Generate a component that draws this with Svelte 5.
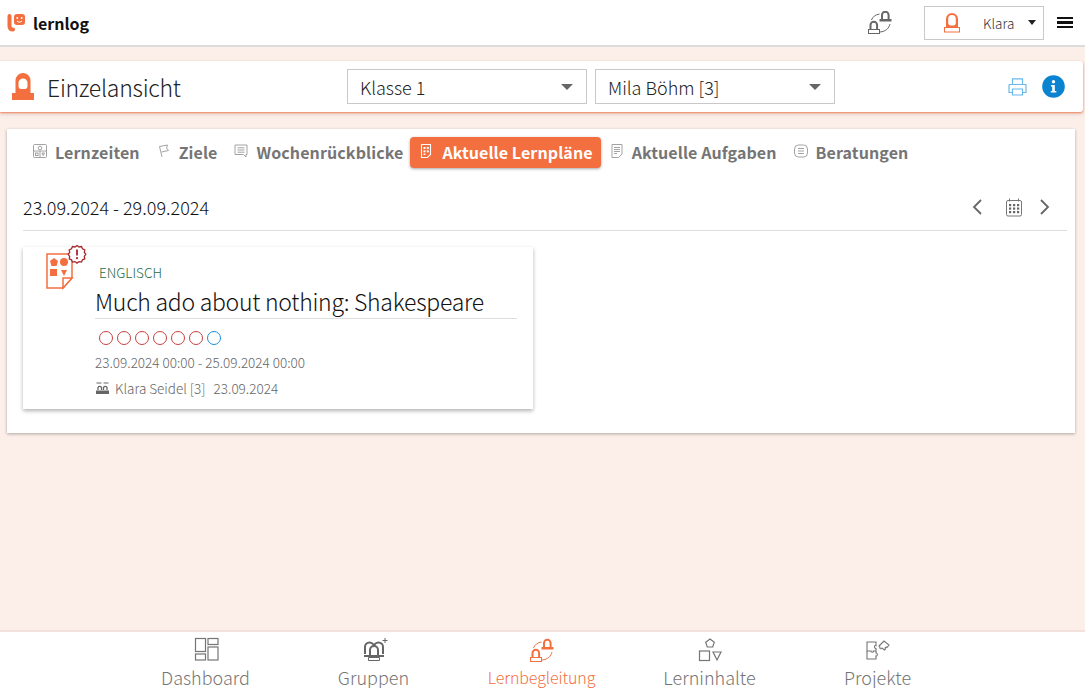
<script>
  const tabs = [
    { id: 'zeit', label: 'Lernzeiten' },
    { id: 'ziel', label: 'Ziele' },
    { id: 'woche', label: 'Wochenrückblicke' },
    { id: 'plan', label: 'Aktuelle Lernpläne', active: true },
    { id: 'aufgabe', label: 'Aktuelle Aufgaben' },
    { id: 'beratung', label: 'Beratungen' }
  ];
  const nav = [
    { id: 'dash', label: 'Dashboard' },
    { id: 'gruppen', label: 'Gruppen' },
    { id: 'begleitung', label: 'Lernbegleitung', active: true },
    { id: 'inhalte', label: 'Lerninhalte' },
    { id: 'projekte', label: 'Projekte' }
  ];
  const dots = ['r', 'r', 'r', 'r', 'r', 'r', 'b'];
</script>

{#snippet pair()}
  <g fill="none" stroke="currentColor">
    <path d="M3.500 18v-4a3.300 3.300 0 0 1 6.600 0v4" stroke-width="2"/>
    <rect x="1.500" y="18.500" width="11" height="4"/>
    <path d="M15 8V4a3.300 3.300 0 0 1 6.600 0v4" stroke-width="2"/>
    <path d="M4.500 9c1-3 4-5.500 8-6M23 13c-1 4-4 7.500-10 8"/>
  </g>
  <rect x="12.500" y="8" width="12" height="2.500" fill="currentColor"/>
{/snippet}

<div class="page">
  <header class="top">
    <div class="brand">
      <svg width="20" height="20" viewBox="0 0 20 20"><path d="M2.500 3v10c0 2.500 1 3.500 3.500 3.500" fill="none" stroke="#f36f3f" stroke-width="4" stroke-linecap="round"/><rect x="7" y="1" width="11" height="11" rx="3" fill="#f36f3f"/><circle cx="10.300" cy="5" r=".9" fill="#fff"/><circle cx="14.700" cy="5" r=".9" fill="#fff"/><path d="M10 8c1.500 1.500 3.500 1.500 5 0" stroke="#fff" fill="none"/></svg>
      <span>lernlog</span>
    </div>
    <div class="top-right">
      <svg class="swap" width="26" height="24" viewBox="0 0 26 24">{@render pair()}</svg>
      <div class="user">
        <svg width="16" height="20" viewBox="0 0 16 20"><path fill-rule="evenodd" d="M2 14.500V6a6 6 0 0 1 12 0v8.500zM4.200 6a3.800 4 0 0 1 7.600 0v4c0 1.500-1 2.500-2 2.500H6.200c-1 0-2-1-2-2.500z" fill="#f36f3f"/><rect x=".5" y="14.500" width="15" height="4.500" fill="#fff" stroke="#f36f3f"/></svg>
        <span class="name">Klara</span>
        <i class="caret small"></i>
      </div>
      <div class="burger"><b></b><b></b><b></b></div>
    </div>
  </header>

  <main>
    <section class="titlebar">
      <div class="title">
        <svg width="22" height="27" viewBox="0 0 22 27"><path fill-rule="evenodd" d="M3.500 21V7.500a7.500 7.500 0 0 1 15 0V21zM6.500 10a4.500 4.500 0 0 1 9 0v3c0 2-1 3-2.500 3H9c-1.500 0-2.500-1-2.500-3z" fill="#f36f3f"/><rect x="0" y="20" width="22" height="7" fill="#f36f3f"/></svg>
        <h1>Einzelansicht</h1>
      </div>
      <div class="selects">
        <div class="select">Klasse 1<i class="caret"></i></div>
        <div class="select">Mila Böhm [3]<i class="caret"></i></div>
      </div>
      <div class="tools">
        <svg width="19" height="18" viewBox="0 0 19 18" fill="none" stroke="#6bb8ea" stroke-width="1.200"><path d="M4.500 6V.8h10V6M1 6.500h17v8h-3.500M1 6.500v8h3.500M4.500 11h10v6h-10z"/></svg>
        <svg width="23" height="23" viewBox="0 0 23 23"><circle cx="11.500" cy="11.500" r="11.300" fill="#0a84d0"/><circle cx="11.500" cy="6.700" r="1.700" fill="#fff"/><path d="M9 10h3.800v6H14.300v1.500H8.800V16h1.400v-4.500H9z" fill="#fff"/></svg>
      </div>
    </section>

    <section class="panel">
      <nav class="tabs">
        {#each tabs as t}
          <div class="tab" class:active={t.active}>
            <svg class="ticon" width="16" height="16" viewBox="0 0 16 16" fill="none" stroke="currentColor" stroke-width=".9">
              {#if t.id === 'zeit'}
                <rect x="1.500" y="1.500" width="13" height="13" rx="1"/><path d="M1.500 8h13M8 8v6.500"/><circle cx="8" cy="5" r="1.800"/><rect x="3.500" y="10" width="2.500" height="2.500"/><path d="M10 10l1.200 2.500L12.500 10z"/>
              {:else if t.id === 'ziel'}
                <path d="M6 14L3.500 3.500 11.500 2l-1 3 2 2.500-7 1.500"/>
              {:else if t.id === 'woche'}
                <path d="M2 2h12v9.500h-1v2.500l-2.500-2.500H2zM4.500 4.800h7M4.500 7h7M4.500 9.200h7"/>
              {:else if t.id === 'plan'}
                <path d="M3.500 1.500h9v10l-3 3h-6z" stroke="#fff" stroke-width="1.100"/><g fill="#fff" stroke="none"><rect x="5.500" y="4" width="2" height="2"/><rect x="8.800" y="4" width="2" height="2"/><rect x="5.500" y="7.300" width="2" height="2"/><rect x="8.800" y="7.300" width="2" height="2"/><rect x="5.500" y="10.500" width="2" height="1.500"/></g>
              {:else if t.id === 'aufgabe'}
                <path d="M3 1.500h10v9.500l-3.500 3.500H3zM5 4.500h6M5 6.500h6M5 8.500h6M5 10.500h3"/>
              {:else}
                <rect x="1.500" y="2" width="13" height="12" rx="4"/><path d="M5 5.500h6M5 8h6M5 10.500h6"/>
              {/if}
            </svg>
            {t.label}
          </div>
        {/each}
      </nav>

      <div class="daterow">
        <span class="range">23.09.2024 - 29.09.2024</span>
        <div class="pager">
          <svg class="prev" width="12" height="18" viewBox="0 0 12 18"><path d="M10 2L3 9l7 7" fill="none" stroke="#666" stroke-width="1.800"/></svg>
          <svg width="18" height="19" viewBox="0 0 18 19" fill="none" stroke="#777"><rect x="1.500" y="2.500" width="15" height="15.500" rx="1.500"/><path d="M4.500 .5v3M13.500 .5v3"/><g fill="#666" stroke="none"><rect x="4" y="6" width="2.200" height="2.200"/><rect x="8" y="6" width="2.200" height="2.200"/><rect x="12" y="6" width="2.200" height="2.200"/><rect x="4" y="9.500" width="2.200" height="2.200"/><rect x="8" y="9.500" width="2.200" height="2.200"/><rect x="12" y="9.500" width="2.200" height="2.200"/><rect x="4" y="13" width="2.200" height="2.200"/><rect x="8" y="13" width="2.200" height="2.200"/><rect x="12" y="13" width="2.200" height="2.200"/></g></svg>
          <svg width="12" height="18" viewBox="0 0 12 18"><path d="M2 2l7 7-7 7" fill="none" stroke="#666" stroke-width="1.800"/></svg>
        </div>
      </div>

      <article class="card">
        <div class="badge">
          <svg width="42" height="42" viewBox="0 0 42 42">
            <path d="M1 7h25v24l-9 10H1z" fill="#fff" stroke="#f36f3f" stroke-width="1.500"/>
            <path d="M17 41V31h9z" fill="#fff" stroke="#f36f3f" stroke-width="1.500"/>
            <path d="M8 11l4 3-1.500 5h-5L4 14z" fill="#f36f3f"/>
            <circle cx="18" cy="15" r="4" fill="#f36f3f"/>
            <rect x="4" y="22" width="7" height="7" fill="#f36f3f"/>
            <path d="M15 23h6l-3 6z" fill="#f36f3f"/>
            <g transform="translate(0 -3)">
              <path d="M31 1.500l2 1.500 2.500-.5 1 2.300 2.300 1-.5 2.500 1.500 2-1.500 2 .5 2.500-2.300 1-1 2.300-2.500-.5-2 1.500-2-1.500-2.500.5-1-2.300-2.300-1 .5-2.500-1.500-2 1.500-2-.5-2.500 2.300-1 1-2.300 2.500.5z" fill="#fff" stroke="#a5292f" stroke-width="1.300"/>
              <path d="M31 5.500v6" stroke="#a5292f" stroke-width="1.800"/><circle cx="31" cy="14.200" r="1.100" fill="#a5292f"/>
            </g>
          </svg>
        </div>
        <div class="body">
          <div class="subject">ENGLISCH</div>
          <h2>Much ado about nothing: Shakespeare</h2>
          <div class="dots">
            {#each dots as d}
              <i class:blue={d === 'b'}></i>
            {/each}
          </div>
          <div class="when">23.09.2024 00:00 - 25.09.2024 00:00</div>
          <div class="who">
            <svg width="15" height="13" viewBox="0 0 14 13" fill="none" stroke="#666"><path d="M1 1h5M8 1h5" stroke-width="1"/><path d="M2.500 8V5.500a2 2 0 0 1 3.500 0V8M8 8V5.500a2 2 0 0 1 3.500 0V8" stroke-width="1.300"/><rect x=".5" y="8.500" width="13" height="3.500" fill="#666" stroke="none"/></svg>
            <span>Klara Seidel [3]</span>
            <span>23.09.2024</span>
          </div>
        </div>
      </article>
    </section>
  </main>

  <footer class="bottom">
    {#each nav as n}
      <div class="item" class:active={n.active}>
        <svg width="28" height="26" viewBox="0 0 28 26" fill="none" stroke="currentColor">
          {#if n.id === 'dash'}
            <g stroke-width="1.200"><rect x="3.500" y="1.500" width="10" height="13"/><rect x="3.500" y="17" width="10" height="6"/><rect x="16" y="1.500" width="10" height="6"/><rect x="16" y="10" width="10" height="13"/></g>
          {:else if n.id === 'gruppen'}
            <g stroke="#666">
              <path d="M5 17V10a4.500 4.500 0 0 1 9 0a4.500 4.500 0 0 1 9 0v7" stroke-width="2"/>
              <path d="M10 18v-5a4 4 0 0 1 8 0v5" stroke-width="2" fill="#fff"/>
              <path d="M4 18h20v2H4z" fill="#666" stroke="none"/>
              <path d="M8.500 20.500h11v3h-11z" fill="#fff"/>
              <path d="M22.500 3.500h5M25 1v5"/>
            </g>
          {:else if n.id === 'begleitung'}
            <g transform="translate(1 2)" stroke="none">{@render pair()}</g>
          {:else if n.id === 'inhalte'}
            <g stroke-width="1.200"><path d="M14 2l4.300 3.200-1.600 4.800h-5.400l-1.600-4.800z"/><rect x="3.500" y="14" width="10" height="9.500"/><path d="M17 15h8l-4 8z"/></g>
          {:else}
            <g stroke-width="1.100"><path d="M3 5h9v3.500c-1.500-.8-2.500 3 0 3V14H9.500c.7 1.500-3 1.500-2.500 0H3z"/><path d="M3 14v8h9v-3c1.500.5 2-3 0-3v-2"/><path d="M15 9l5-5 5 4-2 2.500c-1-1-2.500.5-1.500 1.500l-1 1-2.500-2c-1 1.500-3 .5-2-1z"/></g>
          {/if}
        </svg>
        <span>{n.label}</span>
      </div>
    {/each}
  </footer>
</div>

<style>
  :global(body) {
    margin: 0;
    font-family: "Noto Sans CJK SC", "Noto Sans", sans-serif;
  }
  .page {
    width: 1085px;
    height: 688px;
    display: flex;
    flex-direction: column;
    background: #fceee9;
    overflow: hidden;
  }
  .top {
    height: 45px;
    flex: none;
    background: #fff;
    border-bottom: 2px solid #dcdcdc;
    box-sizing: content-box;
    display: flex;
    justify-content: space-between;
    align-items: center;
    padding: 0 12px 0 7px;
  }
  .brand {
    display: flex;
    align-items: center;
    gap: 6px;
    font-weight: 700;
    font-size: 16px;
    line-height: 24px;
    color: #111;
  }
  .top-right {
    display: flex;
    align-items: center;
  }
  .swap {
    color: #666;
    margin-right: 31px;
  }
  .user {
    width: 118px;
    height: 32px;
    border: 1px solid #c9c9c9;
    display: flex;
    align-items: center;
    position: relative;
    font-size: 13.500px;
    font-weight: 300;
    color: #333;
  }
  .user svg {
    margin-left: 19px;
  }
  .user .name {
    margin-left: 23px;
    line-height: 20px;
  }
  .caret {
    width: 0;
    height: 0;
    border-left: 6px solid transparent;
    border-right: 6px solid transparent;
    border-top: 6px solid #666;
    margin-left: auto;
  }
  .caret.small {
    border-width: 5px 4px 0;
    border-top-color: #222;
    margin-right: 7px;
  }
  .burger {
    width: 16px;
    margin-left: 13px;
    display: flex;
    flex-direction: column;
    gap: 2px;
  }
  .burger b {
    display: block;
    height: 2.500px;
    background: #111;
  }

  main {
    flex: 1;
    padding-top: 14px;
  }
  .titlebar {
    width: 1083px;
    height: 51px;
    background: #fff;
    border-radius: 0 3px 3px 0;
    box-shadow: 0 1px 2px #f4845c, 0 2px 5px rgba(0, 0, 0, .12);
    display: flex;
    align-items: center;
    position: relative;
  }
  .title {
    width: 347px;
    display: flex;
    align-items: center;
    gap: 13px;
    padding-left: 12px;
    box-sizing: border-box;
  }
  h1 {
    margin: 0;
    font-size: 23px;
    letter-spacing: -.25px;
    font-weight: 300;
    line-height: 32px;
    color: #222;
  }
  .selects {
    display: flex;
    gap: 8px;
  }
  .select {
    width: 240px;
    height: 35px;
    box-sizing: border-box;
    border: 1px solid #c9c9c9;
    padding: 0 13px 0 12px;
    display: flex;
    align-items: center;
    font-size: 18px;
    font-weight: 300;
    line-height: 24px;
    color: #222;
  }
  .tools {
    margin-left: auto;
    display: flex;
    align-items: center;
    gap: 15px;
    padding-right: 18px;
  }

  .panel {
    margin: 17px 10px 0 7px;
    height: 304px;
    background: #fff;
    box-shadow: 0 1px 3px rgba(0, 0, 0, .3);
    position: relative;
  }
  .tabs {
    display: flex;
    align-items: center;
    height: 31px;
    padding: 8px 0 0 17px;
  }
  .tab {
    height: 31px;
    box-sizing: border-box;
    display: flex;
    align-items: center;
    gap: 7px;
    padding: 0 8px 2px;
    border-radius: 4px;
    font-size: 16px;
    letter-spacing: .1px;
    font-weight: 700;
    line-height: 22px;
    color: #757575;
    white-space: nowrap;
  }
  .tab .ticon {
    color: #999;
    margin-top: -1px;
  }
  .tab.active {
    background: #f36f3f;
    color: #fff;
    gap: 8px;
    margin-left: -1px;
    box-shadow: 0 1px 3px rgba(0, 0, 0, .35);
  }
  .daterow {
    margin: 22px 8px 0 16px;
    height: 41px;
    box-sizing: border-box;
    border-bottom: 1px solid #ddd;
    display: flex;
    justify-content: space-between;
    align-items: center;
    padding-bottom: 6px;
  }
  .range {
    font-size: 18px;
    font-weight: 300;
    line-height: 24px;
    color: #111;
  }
  .pager {
    display: flex;
    align-items: center;
    gap: 16px;
    padding-right: 16px;
  }
  .prev {
    margin-right: 6px;
  }
  .card {
    margin: 16px 0 0 16px;
    width: 510px;
    height: 162px;
    background: #fff;
    box-shadow: 0 2px 4px rgba(0, 0, 0, .3);
    display: flex;
    position: relative;
  }
  .badge {
    width: 72px;
    flex: none;
    padding: 0 0 0 23px;
    box-sizing: border-box;
  }
  .badge svg {
    overflow: visible;
  }
  .body {
    flex: 1;
    margin-right: 16px;
    padding-top: 16px;
  }
  .subject {
    font-size: 13.500px;
    font-weight: 300;
    line-height: 18px;
    padding-left: 4px;
    color: #1f6b47;
  }
  h2 {
    margin: 5px 0 0;
    padding-bottom: 2px;
    border-bottom: 1px solid #ddd;
    font-size: 23px;
    letter-spacing: -.26px;
    font-weight: 300;
    line-height: 30px;
    color: #111;
  }
  .dots {
    display: flex;
    gap: 4px;
    padding: 12px 0 0 4px;
  }
  .dots i {
    width: 14px;
    height: 14px;
    box-sizing: border-box;
    border: 1px solid #c8403f;
    border-radius: 50%;
  }
  .dots i.blue {
    border-color: #1d8fd8;
  }
  .when {
    margin-top: 8px;
    font-size: 13.500px;
    font-weight: 300;
    line-height: 18px;
    color: #666;
  }
  .who {
    margin-top: 8px;
    display: flex;
    align-items: center;
    font-size: 13.500px;
    font-weight: 300;
    line-height: 18px;
    color: #666;
  }
  .who svg {
    margin-right: 5px;
  }
  .who span + span {
    margin-left: 8px;
  }

  .bottom {
    height: 58px;
    flex: none;
    background: #fff;
    border-top: 2px solid #f3e2db;
    box-sizing: border-box;
    display: grid;
    grid-template-columns: repeat(5, 168px);
    justify-content: center;
    padding-right: 2px;
  }
  .item {
    display: flex;
    flex-direction: column;
    align-items: center;
    color: #757575;
    font-size: 18px;
    font-weight: 300;
    line-height: 20px;
    padding-top: 5px;
  }
  .item span {
    margin-top: 4px;
    white-space: nowrap;
  }
  .item.active {
    color: #f36f3f;
    font-size: 16px;
    letter-spacing: -.1px;
  }
</style>
